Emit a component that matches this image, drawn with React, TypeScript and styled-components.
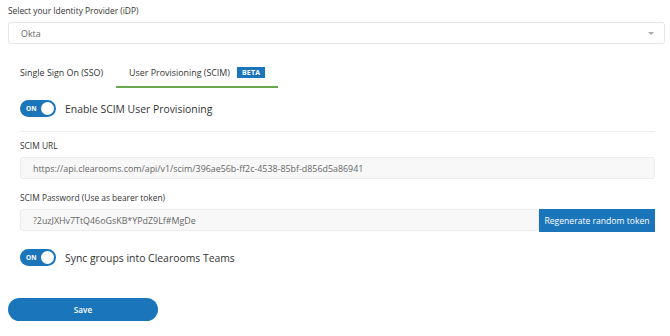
import styled, { createGlobalStyle } from 'styled-components';

const GlobalStyle = createGlobalStyle`
  body {
    margin: 0;
    background: #fff;
    font-family: 'Open Sans', 'Noto Sans', sans-serif;
    color: #333;
  }
`;

const Page = styled.div`
  padding: 5px 5px 0 8px;
`;

const FieldLabel = styled.div`
  font-size: 8.4px;
  line-height: 12px;
  color: #333;
  margin-bottom: 5px;
`;

const SelectBox = styled.div`
  height: 22px;
  box-sizing: border-box;
  border: 1px solid #e6e6e6;
  border-radius: 3px;
  display: flex;
  align-items: center;
  justify-content: space-between;
  padding: 0 10px 0 12px;
  font-size: 8.9px;
  color: #666;
`;

const Caret = styled.span`
  width: 0;
  height: 0;
  border-left: 3px solid transparent;
  border-right: 3px solid transparent;
  border-top: 3px solid #aaa;
`;

const Body = styled.div`
  padding: 0 10px 0 12px;
`;

const Tabs = styled.div`
  display: flex;
  margin-top: 19px;
`;

const Tab = styled.div<{ $active?: boolean }>`
  display: flex;
  align-items: center;
  gap: 7px;
  height: 25px;
  box-sizing: border-box;
  padding: 0 13px 4px ${(p) => (p.$active ? '13px' : '0')};
  font-size: 8.9px;
  color: #333;
  border-bottom: 2px solid ${(p) => (p.$active ? '#6aa84f' : 'transparent')};
`;

const Badge = styled.span`
  background: #1b75bb;
  color: #fff;
  font-size: 7px;
  font-weight: 700;
  padding: 0 5px;
  line-height: 11px;
  letter-spacing: 0.2px;
`;

const ToggleRow = styled.div<{ $top: number }>`
  display: flex;
  align-items: center;
  gap: 9px;
  margin-top: ${(p) => p.$top}px;
  font-size: 10.4px;
  line-height: 14px;
  color: #333;
`;

const Switch = styled.div`
  width: 36px;
  height: 17px;
  border-radius: 9px;
  background: #1b75bb;
  display: flex;
  align-items: center;
  justify-content: space-between;
  padding: 0 2px 0 6px;
  box-sizing: border-box;
  flex-shrink: 0;
`;

const SwitchText = styled.span`
  color: #fff;
  font-size: 6.5px;
  font-weight: 700;
`;

const Knob = styled.span`
  width: 13px;
  height: 13px;
  border-radius: 50%;
  background: #fff;
`;

const Divider = styled.hr`
  border: 0;
  border-top: 1px solid #eee;
  margin: 14px 0 8px;
`;

const Field = styled.div<{ $top?: number }>`
  margin-top: ${(p) => p.$top ?? 0}px;
`;

const InputRow = styled.div`
  display: flex;
`;

const Input = styled.div`
  flex: 1;
  height: 22px;
  box-sizing: border-box;
  border: 1px solid #ececec;
  border-radius: 3px;
  background: #f8f8f8;
  display: flex;
  align-items: center;
  padding: 0 12px;
  font-size: 8.9px;
  color: #666;
`;

const RegenButton = styled.button`
  width: 116px;
  height: 23px;
  border: 0;
  background: #1b75bb;
  color: #fff;
  font-family: inherit;
  font-size: 8.6px;
  white-space: nowrap;
  padding: 0;
`;

const SaveButton = styled.button`
  display: block;
  width: 150px;
  height: 23px;
  border: 0;
  border-radius: 12px;
  background: #1b75bb;
  color: #fff;
  font-family: inherit;
  font-size: 8.2px;
  font-weight: 600;
  margin-top: 32px;
  padding: 0;
`;

const Toggle = () => (
  <Switch>
    <SwitchText>ON</SwitchText>
    <Knob />
  </Switch>
);

export default function App() {
  return (
    <Page>
      <GlobalStyle />
      <FieldLabel>Select your Identity Provider (iDP)</FieldLabel>
      <SelectBox>
        Okta
        <Caret />
      </SelectBox>
      <Body>
        <Tabs>
          <Tab>Single Sign On (SSO)</Tab>
          <Tab $active>
            User Provisioning (SCIM)
            <Badge>BETA</Badge>
          </Tab>
        </Tabs>
        <ToggleRow $top={12}>
          <Toggle />
          Enable SCIM User Provisioning
        </ToggleRow>
        <Divider />
        <Field>
          <FieldLabel>SCIM URL</FieldLabel>
          <Input>https://api.clearooms.com/api/v1/scim/396ae56b-ff2c-4538-85bf-d856d5a86941</Input>
        </Field>
        <Field $top={13}>
          <FieldLabel>SCIM Password (Use as bearer token)</FieldLabel>
          <InputRow>
            <Input>?2uzJXHv7TtQ46oGsKB*YPdZ9Lf#MgDe</Input>
            <RegenButton>Regenerate random token</RegenButton>
          </InputRow>
        </Field>
        <ToggleRow $top={17}>
          <Toggle />
          Sync groups into Clearooms Teams
        </ToggleRow>
      </Body>
      <SaveButton>Save</SaveButton>
    </Page>
  );
}
